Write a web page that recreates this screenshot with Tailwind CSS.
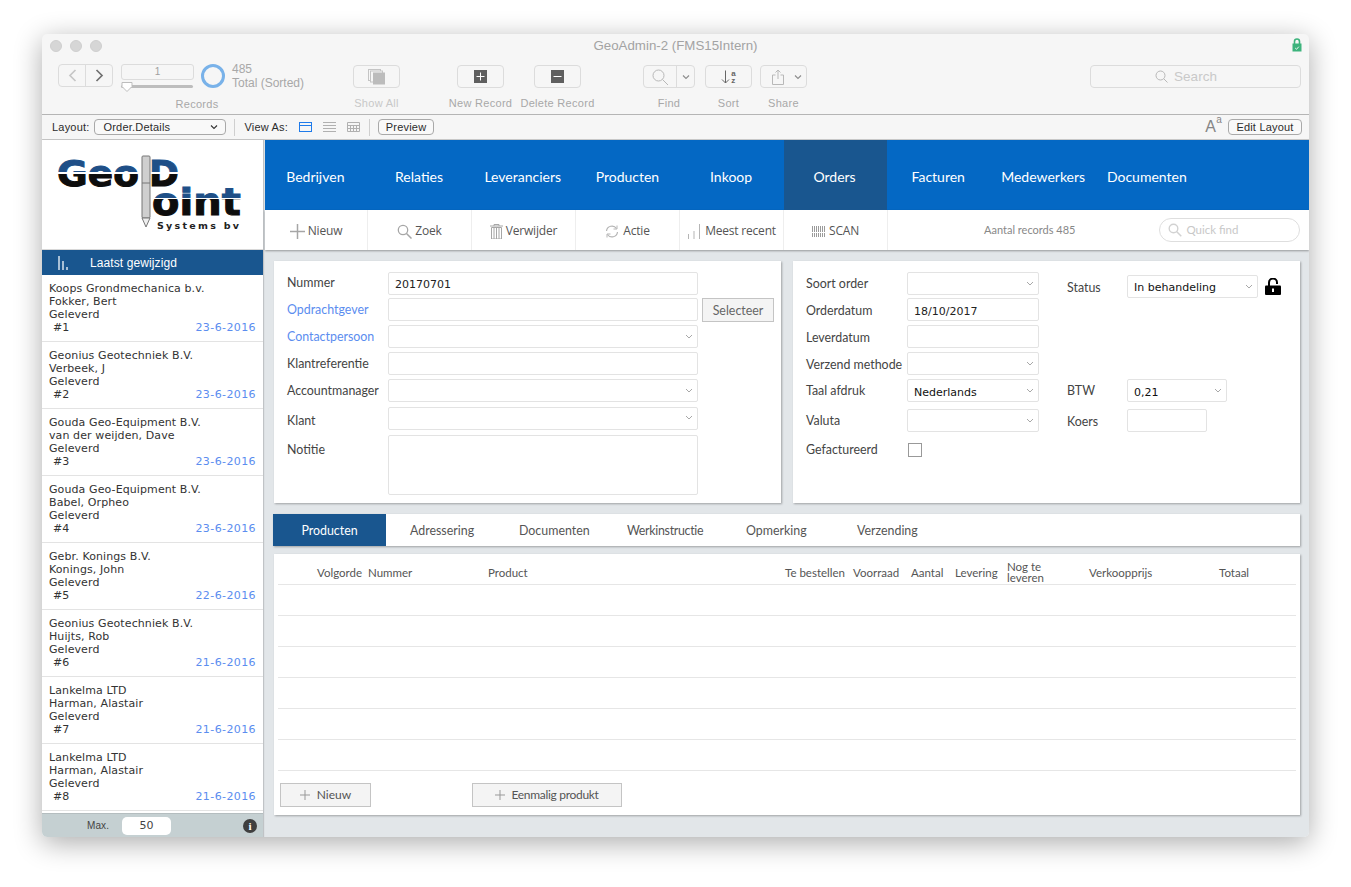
<!DOCTYPE html>
<html lang="en">
<head>
  <meta charset="UTF-8" />
  <title>GeoAdmin-2 (FMS15Intern)</title>
  <script src="https://cdn.jsdelivr.net/npm/@tailwindcss/browser@4"></script>
</head>
<body class="bg-white overflow-hidden">
<div class="w-[1351px] h-[887px] pt-[34px] pl-[42px]">
<!-- window -->
<div class="w-[1267px] h-[803px] rounded-[5px] overflow-hidden bg-[#f6f6f6] shadow-[0_6px_28px_rgba(0,0,0,0.33)] flex flex-col font-['Liberation_Sans',sans-serif]">

  <!-- title + toolbar -->
  <div class="h-[81px] shrink-0 border-b border-[#b5b5b5] relative">
    <div class="absolute left-[8px] top-[6px] flex gap-[8px]">
      <span class="w-[12px] h-[12px] rounded-full bg-[#d6d6d6] border border-[#cfcfcf]"></span>
      <span class="w-[12px] h-[12px] rounded-full bg-[#d6d6d6] border border-[#cfcfcf]"></span>
      <span class="w-[12px] h-[12px] rounded-full bg-[#d6d6d6] border border-[#cfcfcf]"></span>
    </div>
    <div class="text-center text-[13.3px] leading-[24px] text-[#a3a3a3]">GeoAdmin-2 (FMS15Intern)</div>
    <svg class="absolute right-[7px] top-[4px]" width="10" height="14" viewBox="0 0 10 14"><path d="M2.5 6V3.5a2.5 2.5 0 0 1 5 0V6" fill="none" stroke="#3db37c" stroke-width="1.6"/><rect x="0.5" y="5.5" width="9" height="8" fill="#3db37c"/><path d="M3.2 10l1.3 1.3 2.3-2.6" fill="none" stroke="#fff" stroke-width="0.9"/></svg>

    <div class="flex pl-[16px] pt-[6px] text-[11px] text-[#a8a8a8]">
      <!-- records -->
      <div class="w-[278px] flex flex-col items-center">
        <div class="h-[33px] w-full flex">
          <div class="w-[55px] h-[23px] border border-[#dcdcdc] rounded-[4px] flex">
            <span class="w-[27px] border-r border-[#dcdcdc] flex items-center justify-center"><svg width="9" height="13" viewBox="0 0 9 13"><path d="M7.5 1L2 6.5 7.5 12" fill="none" stroke="#c6c6c6" stroke-width="1.7"/></svg></span>
            <span class="flex-1 flex items-center justify-center"><svg width="9" height="13" viewBox="0 0 9 13"><path d="M1.5 1L7 6.5 1.500 12" fill="none" stroke="#707070" stroke-width="1.7"/></svg></span>
          </div>
          <div class="ml-[8px] w-[73px] relative">
            <div class="h-[16px] border border-[#dcdcdc] rounded-[3px] text-center text-[10px] leading-[14px] text-[#a0a0a0]">1</div>
            <div class="mt-[5px] h-[3px] w-[72px] bg-[#bdbdbd] rounded-full"></div>
            <svg class="absolute left-0 top-[17px]" width="12" height="12" viewBox="0 0 12 12"><path d="M1 1.500h10v4L6 10.500 1 5.500z" fill="#fff" stroke="#bdbdbd"/></svg>
          </div>
          <div class="ml-[7px] w-[24px] h-[24px] rounded-full border-[3.5px] border-[#79b2e9]"></div>
          <div class="ml-[7px] -mt-[2px] leading-[14px] text-[#a8a8a8] whitespace-nowrap text-[12px]"><div>485</div><div>Total (Sorted)</div></div>
        </div>
        <div class="mt-[1px] leading-[13px] tracking-[0.3px]">Records</div>
      </div>
      <!-- show all -->
      <div class="ml-[17px] w-[47px] flex flex-col items-center">
        <div class="mt-[1px] h-[23px] w-[47px] border border-[#dcdcdc] rounded-[4px] flex items-center justify-center">
          <svg width="18" height="16" viewBox="0 0 18 16"><rect x="0.500" y="0.500" width="12" height="11" fill="none" stroke="#c4c4c4"/><rect x="2.500" y="2" width="12" height="11" fill="#f6f6f6" stroke="#c4c4c4"/><rect x="5" y="3.500" width="12" height="12" fill="#bcbcbc"/></svg>
        </div>
        <div class="mt-[9px] leading-[13px] whitespace-nowrap tracking-[0.3px] text-[#c8c8c8]">Show All</div>
      </div>
      <!-- new record -->
      <div class="ml-[57px] w-[47px] flex flex-col items-center">
        <div class="mt-[1px] h-[23px] w-[47px] border border-[#dcdcdc] rounded-[4px] flex items-center justify-center">
          <svg width="13" height="13" viewBox="0 0 13 13"><rect width="13" height="13" fill="#5f5f5f"/><path d="M6.500 2.500v8M2.500 6.500h8" stroke="#fff" stroke-width="1"/></svg>
        </div>
        <div class="mt-[9px] leading-[13px] whitespace-nowrap tracking-[0.3px]">New Record</div>
      </div>
      <!-- delete record -->
      <div class="ml-[30px] w-[47px] flex flex-col items-center">
        <div class="mt-[1px] h-[23px] w-[47px] border border-[#dcdcdc] rounded-[4px] flex items-center justify-center">
          <svg width="13" height="13" viewBox="0 0 13 13"><rect width="13" height="13" fill="#5f5f5f"/><path d="M2.500 6.500h8" stroke="#fff" stroke-width="1"/></svg>
        </div>
        <div class="mt-[9px] leading-[13px] whitespace-nowrap tracking-[0.3px]">Delete Record</div>
      </div>
      <!-- find -->
      <div class="ml-[62px] w-[52px] flex flex-col items-center">
        <div class="mt-[1px] h-[23px] w-[52px] border border-[#dcdcdc] rounded-[4px] flex">
          <span class="w-[33px] border-r border-[#dcdcdc] flex items-center justify-center"><svg width="18" height="18" viewBox="0 0 18 18"><circle cx="7.500" cy="7.500" r="5.500" fill="none" stroke="#b8b8b8" stroke-width="1"/><path d="M11.500 11.500l5.500 5.500" stroke="#b8b8b8" stroke-width="1"/></svg></span>
          <span class="flex-1 flex items-center justify-center"><svg width="8" height="6" viewBox="0 0 8 6"><path d="M1 1.500l3 3 3-3" fill="none" stroke="#8c8c8c" stroke-width="1.100"/></svg></span>
        </div>
        <div class="mt-[9px] leading-[13px] tracking-[0.3px]">Find</div>
      </div>
      <!-- sort -->
      <div class="ml-[10px] w-[47px] flex flex-col items-center">
        <div class="mt-[1px] h-[23px] w-[47px] border border-[#dcdcdc] rounded-[4px] flex items-center justify-center gap-[1px]">
          <svg width="9" height="14" viewBox="0 0 9 14"><path d="M4.500 0.500v12.500M1 9.500l3.500 3.500L8 9.500" fill="none" stroke="#666" stroke-width="1"/></svg>
          <span class="flex flex-col text-[8px] leading-[7px] font-bold text-[#666]"><span>a</span><span>z</span></span>
        </div>
        <div class="mt-[9px] leading-[13px] tracking-[0.3px]">Sort</div>
      </div>
      <!-- share -->
      <div class="ml-[8px] w-[47px] flex flex-col items-center">
        <div class="mt-[1px] h-[23px] w-[47px] border border-[#dcdcdc] rounded-[4px] flex items-center pl-[11px] gap-[10px]">
          <svg width="12" height="16" viewBox="0 0 12 16"><path d="M6 10V1M3.500 3.500L6 1l2.500 2.500M3.500 6H.5v9.500h11V6h-3" fill="none" stroke="#b8b8b8" stroke-width="1"/></svg>
          <svg width="8" height="6" viewBox="0 0 8 6"><path d="M1 1.500l3 3 3-3" fill="none" stroke="#8c8c8c" stroke-width="1.100"/></svg>
        </div>
        <div class="mt-[9px] leading-[13px] tracking-[0.3px]">Share</div>
      </div>
      <!-- search -->
      <div class="ml-[283px] mt-[1px] w-[211px] h-[23px] border border-[#dcdcdc] rounded-[4px] flex items-center justify-center gap-[6px] pr-[19px] text-[13.5px] text-[#c9c9c9]">
        <svg width="13" height="13" viewBox="0 0 13 13"><circle cx="5.500" cy="5.500" r="4.500" fill="none" stroke="#b8b8b8" stroke-width="1"/><path d="M8.800 8.800l3.700 3.700" stroke="#b8b8b8" stroke-width="1"/></svg>
        <span class="pt-[2px]">Search</span>
      </div>
    </div>
  </div>

  <!-- layout bar -->
  <div class="h-[25px] shrink-0 flex items-center pl-[10px] pr-[7px] text-[11px] tracking-[0.2px] text-[#2c2c2c] border-b border-[#c8c8c8]">
    <span>Layout:</span>
    <div class="ml-[5px] w-[132px] h-[16px] border border-[#a9a9a9] rounded-[4px] bg-[#f9f9f9] flex items-center justify-between pl-[8px] pr-[7px]">
      <span>Order.Details</span>
      <svg width="8" height="6" viewBox="0 0 8 6"><path d="M1 1.500l3 3 3-3" fill="none" stroke="#333" stroke-width="1.100"/></svg>
    </div>
    <span class="ml-[8px] w-px h-[17px] bg-[#cfcfcf]"></span>
    <span class="ml-[9px]">View As:</span>
    <svg class="ml-[11px]" width="13" height="10" viewBox="0 0 13 10"><rect x="0.500" y="0.500" width="12" height="9" fill="none" stroke="#1f7bea"/><path d="M0.500 3.500h12" stroke="#1f7bea"/></svg>
    <svg class="ml-[11px]" width="13" height="10" viewBox="0 0 13 10"><path d="M0 .5h13M0 3.500h13M0 6.500h13M0 9.500h13" stroke="#b0b0b0"/></svg>
    <svg class="ml-[11px]" width="13" height="10" viewBox="0 0 13 10"><path d="M.5 .5h12v9H.5zM0 3.500h13M0 6.500h13M3.500 3v7M6.500 3v7M9.500 3v7" fill="none" stroke="#b0b0b0"/></svg>
    <span class="ml-[9px] w-px h-[17px] bg-[#cfcfcf]"></span>
    <div class="ml-[8px] w-[56px] h-[16px] border border-[#a9a9a9] rounded-[4px] bg-[#f9f9f9] text-center leading-[14px]">Preview</div>
    <span class="ml-auto text-[16px] leading-none text-[#858585]">A<sup class="text-[10px] align-[4px] leading-none">a</sup></span>
    <div class="ml-[6px] w-[74px] h-[16px] border border-[#a9a9a9] rounded-[4px] bg-[#f9f9f9] text-center leading-[14px]">Edit Layout</div>
  </div>

  <!-- content -->
  <div class="flex-1 flex min-h-0 bg-[#e2e6e9]">

    <!-- left column -->
    <div class="w-[221px] shrink-0 flex flex-col bg-white shadow-[1px_0_1px_rgba(0,0,0,0.15)] font-['DejaVu_Sans',sans-serif] text-[11px] tracking-[0.1px] leading-[13px] text-[#333]">
      <div class="h-[110px] shrink-0 border-b border-[#d8d8d8] pt-[15px] pl-[15px]">
        <svg width="186" height="82" viewBox="0 0 186 82">
          <defs>
            <linearGradient id="logoTop" gradientUnits="userSpaceOnUse" x1="0" y1="0" x2="0" y2="36">
              <stop offset="0.47" stop-color="#1f4f87"/>
              <stop offset="0.47" stop-color="#ffffff"/>
              <stop offset="0.52" stop-color="#ffffff"/>
              <stop offset="0.52" stop-color="#0d0d0d"/>
            </linearGradient>
            <linearGradient id="logoBottom" gradientUnits="userSpaceOnUse" x1="0" y1="30" x2="0" y2="62">
              <stop offset="0.4" stop-color="#1f4f87"/>
              <stop offset="0.4" stop-color="#ffffff"/>
              <stop offset="0.45" stop-color="#ffffff"/>
              <stop offset="0.45" stop-color="#0d0d0d"/>
            </linearGradient>
          </defs>
          <text x="0" y="31" font-family="DejaVu Sans" font-weight="700" font-size="36" textLength="82" lengthAdjust="spacingAndGlyphs" fill="url(#logoTop)" stroke="url(#logoTop)" stroke-width="1">Geo</text>
          <text x="92" y="31" font-family="DejaVu Sans" font-weight="700" font-size="36" textLength="30" lengthAdjust="spacingAndGlyphs" fill="url(#logoTop)" stroke="url(#logoTop)" stroke-width="1">D</text>
          <text x="95" y="60" font-family="DejaVu Sans" font-weight="700" font-size="38" textLength="89" lengthAdjust="spacingAndGlyphs" fill="url(#logoBottom)" stroke="url(#logoBottom)" stroke-width="1">oint</text>
          <rect x="85" y="1" width="8" height="62" rx="1" fill="#cfcfcf" stroke="#777"/>
          <path d="M85 63l4 9 4-9z" fill="#eee" stroke="#777"/>
          <path d="M85 28h8" stroke="#777"/>
          <text x="100" y="74" font-family="DejaVu Sans" font-weight="700" font-size="9.500" textLength="82" fill="#222">Systems bv</text>
        </svg>
      </div>
      <div class="h-[25px] shrink-0 bg-[#19568f] flex items-center text-white font-['Liberation_Sans',sans-serif] text-[12px]">
        <svg class="ml-[16px]" width="12" height="14" viewBox="0 0 12 14"><path d="M1 0v14M5 5v9M9 11v3" stroke="#d7e3ee" stroke-width="1.500"/></svg>
        <span class="ml-[20px] pt-[1px]">Laatst gewijzigd</span>
      </div>

      <div class="flex-1 min-h-0 overflow-hidden">
        <div class="h-[67px] pt-[7px] pl-[7px] pr-[7px] border-b border-[#e3e3e3]">
          <div>Koops Grondmechanica b.v.</div><div>Fokker, Bert</div><div>Geleverd</div>
          <div class="flex justify-between pl-[4px]"><span>#1</span><span class="text-[#5b8def] tracking-[0.4px]">23-6-2016</span></div>
        </div>
        <div class="h-[67px] pt-[7px] pl-[7px] pr-[7px] border-b border-[#e3e3e3]">
          <div>Geonius Geotechniek B.V.</div><div>Verbeek, J</div><div>Geleverd</div>
          <div class="flex justify-between pl-[4px]"><span>#2</span><span class="text-[#5b8def] tracking-[0.4px]">23-6-2016</span></div>
        </div>
        <div class="h-[67px] pt-[7px] pl-[7px] pr-[7px] border-b border-[#e3e3e3]">
          <div>Gouda Geo-Equipment B.V.</div><div>van der weijden, Dave</div><div>Geleverd</div>
          <div class="flex justify-between pl-[4px]"><span>#3</span><span class="text-[#5b8def] tracking-[0.4px]">23-6-2016</span></div>
        </div>
        <div class="h-[67px] pt-[7px] pl-[7px] pr-[7px] border-b border-[#e3e3e3]">
          <div>Gouda Geo-Equipment B.V.</div><div>Babel, Orpheo</div><div>Geleverd</div>
          <div class="flex justify-between pl-[4px]"><span>#4</span><span class="text-[#5b8def] tracking-[0.4px]">23-6-2016</span></div>
        </div>
        <div class="h-[67px] pt-[7px] pl-[7px] pr-[7px] border-b border-[#e3e3e3]">
          <div>Gebr. Konings B.V.</div><div>Konings, John</div><div>Geleverd</div>
          <div class="flex justify-between pl-[4px]"><span>#5</span><span class="text-[#5b8def] tracking-[0.4px]">22-6-2016</span></div>
        </div>
        <div class="h-[67px] pt-[7px] pl-[7px] pr-[7px] border-b border-[#e3e3e3]">
          <div>Geonius Geotechniek B.V.</div><div>Huijts, Rob</div><div>Geleverd</div>
          <div class="flex justify-between pl-[4px]"><span>#6</span><span class="text-[#5b8def] tracking-[0.4px]">21-6-2016</span></div>
        </div>
        <div class="h-[67px] pt-[7px] pl-[7px] pr-[7px] border-b border-[#e3e3e3]">
          <div>Lankelma LTD</div><div>Harman, Alastair</div><div>Geleverd</div>
          <div class="flex justify-between pl-[4px]"><span>#7</span><span class="text-[#5b8def] tracking-[0.4px]">21-6-2016</span></div>
        </div>
        <div class="h-[67px] pt-[7px] pl-[7px] pr-[7px] border-b border-[#e3e3e3]">
          <div>Lankelma LTD</div><div>Harman, Alastair</div><div>Geleverd</div>
          <div class="flex justify-between pl-[4px]"><span>#8</span><span class="text-[#5b8def] tracking-[0.4px]">21-6-2016</span></div>
        </div>
      </div>

      <div class="h-[24px] shrink-0 bg-[#c5d0d2] border-t border-[#b4bdbf] flex items-center">
        <span class="ml-[45px] text-[10px] font-['Liberation_Sans',sans-serif] text-[#444]">Max.</span>
        <span class="ml-[13px] w-[49px] h-[18px] rounded-[5px] bg-white text-center leading-[18px] text-[#444]">50</span>
        <span class="ml-auto mr-[6px] w-[14px] h-[14px] rounded-full bg-[#3f3f3f] text-white text-center text-[11px] leading-[14px] font-bold font-['Liberation_Serif',serif]">i</span>
      </div>
    </div>

    <!-- right column -->
    <div class="w-[1044px] ml-[2px] font-['Lato',sans-serif] text-[12.4px] text-[#444]">

      <!-- main nav -->
      <div class="h-[70px] bg-[#0468c4] flex pl-[0.5px] text-white text-[14px] leading-[74px] text-center">
        <div class="w-[103.700px] pr-[4px]">Bedrijven</div>
        <div class="w-[103.700px] pr-[4px]">Relaties</div>
        <div class="w-[103.700px] pr-[4px]">Leveranciers</div>
        <div class="w-[103.700px] pr-[2px]">Producten</div>
        <div class="w-[103.700px] pr-[2px]">Inkoop</div>
        <div class="w-[103.200px] pr-[2px] bg-[#19568f]">Orders</div>
        <div class="w-[104.200px] pr-[2px]">Facturen</div>
        <div class="w-[103.700px]">Medewerkers</div>
        <div class="w-[103.700px]">Documenten</div>
      </div>

      <!-- action bar -->
      <div class="h-[40px] bg-white shadow-[0_1px_2px_rgba(0,0,0,0.35)] flex items-center font-['Open_Sans',sans-serif] text-[12px] text-[#555] tracking-[-0.2px]">
        <div class="w-[103px] h-full pt-[2px] border-r border-[#eeeeee] flex items-center justify-center gap-[3px]"><svg width="15" height="15" viewBox="0 0 15 15"><path d="M7.500 0v15M0 7.500h15" stroke="#a6a6a6" stroke-width="1.500"/></svg><span>Nieuw</span></div>
        <div class="w-[104px] h-full pt-[2px] border-r border-[#eeeeee] flex items-center justify-center gap-[3px]"><svg width="15" height="15" viewBox="0 0 15 15"><circle cx="6" cy="6" r="4.700" fill="none" stroke="#a6a6a6" stroke-width="1.300"/><path d="M9.500 9.500l5 5" stroke="#a6a6a6" stroke-width="1.500"/></svg><span>Zoek</span></div>
        <div class="w-[104px] h-full pt-[2px] border-r border-[#eeeeee] flex items-center justify-center gap-[3px]"><svg width="13" height="15" viewBox="0 0 13 15"><path d="M0 2h13M4 2V.5h5V2" fill="none" stroke="#a6a6a6"/><path d="M1.500 3.500h10V15h-10zM4 4v11M6.500 4v11M9 4v11" fill="none" stroke="#a6a6a6"/></svg><span>Verwijder</span></div>
        <div class="w-[104px] h-full pt-[2px] border-r border-[#eeeeee] flex items-center justify-center gap-[4px]"><svg width="14" height="13" viewBox="0 0 14 13"><path d="M1.500 6a5.500 5.500 0 0 1 10-2.500M12.500 7a5.500 5.500 0 0 1-10 2.500" fill="none" stroke="#b5b5b5" stroke-width="1.200"/><path d="M12 0.500v3.500H8.500M2 12.500V9h3.500" fill="none" stroke="#b5b5b5" stroke-width="1"/></svg><span>Actie</span></div>
        <div class="w-[104px] h-full pt-[2px] border-r border-[#eeeeee] flex items-center justify-center gap-[4px]"><svg width="14" height="15" viewBox="0 0 14 15"><path d="M1.500 10v5M7 7v8M12.500 0v15" stroke="#b5b5b5" stroke-width="1"/></svg><span>Meest recent</span></div>
        <div class="w-[104px] h-full pt-[2px] border-r border-[#eeeeee] flex items-center justify-center gap-[4px]"><svg width="13" height="11" viewBox="0 0 13 11"><path d="M.5 0v11M2.500 0v11M4.500 0v11M6.500 0v11M8.500 0v11M10.500 0v11M12.500 0v11" stroke="#9a9a9a"/><path d="M0 6.500h13" stroke="#fff"/></svg><span>SCAN</span></div>
        <div class="ml-[96px] text-[11px] font-['Lato',sans-serif] text-[#888] tracking-normal">Aantal records 485</div>
        <div class="ml-[84px] w-[141px] h-[24px] border border-[#dedede] rounded-full flex items-center pl-[8px] gap-[4px] text-[11.500px] font-['Lato',sans-serif] text-[#c8c8c8] tracking-normal">
          <svg width="14" height="14" viewBox="0 0 14 14"><circle cx="5.500" cy="5.500" r="4.300" fill="none" stroke="#d2d2d2" stroke-width="1.400"/><path d="M8.800 8.800l4.500 4.500" stroke="#d2d2d2" stroke-width="1.500"/></svg>
          <span>Quick find</span>
        </div>
      </div>

      <!-- form panels -->
      <div class="flex gap-[12px] mt-[11px] ml-[9px]">
        <div class="w-[507px] h-[242px] bg-white shadow-[1px_1px_2px_rgba(0,0,0,0.3)] pt-[11px] pl-[13px]">
          <div class="flex h-[23px] items-center"><span class="w-[101px]">Nummer</span><div class="w-[310px] h-[23px] border border-[#e3e3e3] rounded-[2px] pl-[6px] leading-[23px] font-['DejaVu_Sans',sans-serif] text-[11px] text-[#222]">20170701</div></div>
          <div class="flex h-[23px] items-center mt-[3px]"><span class="w-[101px] pt-[2px] text-[#5b8def]">Opdrachtgever</span><div class="w-[310px] h-[23px] border border-[#e3e3e3] rounded-[2px]"></div><div class="ml-[4px] w-[72px] h-[24px] bg-[#f4f4f4] border border-[#c4c4c4] text-center leading-[23px] text-[#666]">Selecteer</div></div>
          <div class="flex h-[23px] items-center mt-[4px]"><span class="w-[101px] pt-[2px] text-[#5b8def]">Contactpersoon</span><div class="w-[310px] h-[23px] border border-[#e3e3e3] rounded-[2px] flex items-center justify-end pr-[4px]"><svg width="8" height="5" viewBox="0 0 8 5"><path d="M1 1l3 3 3-3" fill="none" stroke="#a8a8a8"/></svg></div></div>
          <div class="flex h-[23px] items-center mt-[4px]"><span class="w-[101px] pt-[2px]">Klantreferentie</span><div class="w-[310px] h-[23px] border border-[#e3e3e3] rounded-[2px]"></div></div>
          <div class="flex h-[23px] items-center mt-[4px]"><span class="w-[101px] pt-[2px]">Accountmanager</span><div class="w-[310px] h-[23px] border border-[#e3e3e3] rounded-[2px] flex items-center justify-end pr-[4px]"><svg width="8" height="5" viewBox="0 0 8 5"><path d="M1 1l3 3 3-3" fill="none" stroke="#a8a8a8"/></svg></div></div>
          <div class="flex h-[23px] items-center mt-[5px]"><span class="w-[101px] pt-[6px]">Klant</span><div class="w-[310px] h-[23px] border border-[#e3e3e3] rounded-[2px] flex items-center justify-end pr-[4px] pb-[3px]"><svg width="8" height="5" viewBox="0 0 8 5"><path d="M1 1l3 3 3-3" fill="none" stroke="#a8a8a8"/></svg></div></div>
          <div class="flex mt-[5px]"><span class="w-[101px] pt-[6px]">Notitie</span><div class="w-[310px] h-[60px] border border-[#e3e3e3] rounded-[2px]"></div></div>
        </div>

        <div class="w-[507px] h-[242px] bg-white shadow-[1px_1px_2px_rgba(0,0,0,0.3)] pt-[11px] pl-[13px] flex">
          <div class="w-[261px]">
            <div class="flex h-[23px] items-center"><span class="w-[101px] pt-[1px]">Soort order</span><div class="w-[132px] h-[23px] border border-[#e3e3e3] rounded-[2px] flex items-center justify-end pr-[4px]"><svg width="8" height="5" viewBox="0 0 8 5"><path d="M1 1l3 3 3-3" fill="none" stroke="#a8a8a8"/></svg></div></div>
            <div class="flex h-[23px] items-center mt-[3px]"><span class="w-[101px] pt-[3px]">Orderdatum</span><div class="w-[132px] h-[23px] border border-[#e3e3e3] rounded-[2px] pl-[6px] leading-[25px] font-['DejaVu_Sans',sans-serif] text-[11px] text-[#222]">18/10/2017</div></div>
            <div class="flex h-[23px] items-center mt-[4px]"><span class="w-[101px] pt-[3px]">Leverdatum</span><div class="w-[132px] h-[23px] border border-[#e3e3e3] rounded-[2px]"></div></div>
            <div class="flex h-[23px] items-center mt-[4px]"><span class="w-[101px] pt-[3px]">Verzend methode</span><div class="w-[132px] h-[23px] border border-[#e3e3e3] rounded-[2px] flex items-center justify-end pr-[4px]"><svg width="8" height="5" viewBox="0 0 8 5"><path d="M1 1l3 3 3-3" fill="none" stroke="#a8a8a8"/></svg></div></div>
            <div class="flex h-[23px] items-center mt-[4px]"><span class="w-[101px] pt-[2px]">Taal afdruk</span><div class="w-[132px] h-[23px] border border-[#e3e3e3] rounded-[2px] flex items-center justify-between pl-[6px] pr-[4px] font-['DejaVu_Sans',sans-serif] text-[11px] text-[#111]"><span class="pt-[5px]">Nederlands</span><svg width="8" height="5" viewBox="0 0 8 5"><path d="M1 1l3 3 3-3" fill="none" stroke="#a8a8a8"/></svg></div></div>
            <div class="flex h-[23px] items-center mt-[7px]"><span class="w-[101px] pt-[1px]">Valuta</span><div class="w-[132px] h-[23px] border border-[#e3e3e3] rounded-[2px] flex items-center justify-end pr-[4px]"><svg width="8" height="5" viewBox="0 0 8 5"><path d="M1 1l3 3 3-3" fill="none" stroke="#a8a8a8"/></svg></div></div>
            <div class="flex h-[14px] items-center mt-[11px]"><span class="w-[101px]">Gefactureerd</span><div class="ml-[1px] w-[14px] h-[14px] border border-[#999]"></div></div>
          </div>
          <div class="w-[220px]">
            <div class="flex h-[23px] items-center mt-[3px]"><span class="w-[60px] pt-[3px]">Status</span><div class="w-[131px] h-[23px] border border-[#e3e3e3] rounded-[2px] flex items-center justify-between pl-[6px] pr-[4px] font-['DejaVu_Sans',sans-serif] text-[11px] text-[#111]"><span class="pt-[4px]">In behandeling</span><svg width="8" height="5" viewBox="0 0 8 5"><path d="M1 1l3 3 3-3" fill="none" stroke="#a8a8a8"/></svg></div><svg class="ml-[7px]" width="16" height="17" viewBox="0 0 16 17"><path d="M4 8V4.500a4 4 0 0 1 8 0V6" fill="none" stroke="#000" stroke-width="2"/><rect x="0" y="7.500" width="16" height="9.500" rx="1" fill="#000"/><rect x="7" y="10.500" width="2" height="3.500" fill="#fff"/></svg></div>
            <div class="flex h-[23px] items-center mt-[81px]"><span class="w-[60px] pt-[2px]">BTW</span><div class="w-[100px] h-[23px] border border-[#e3e3e3] rounded-[2px] flex items-center justify-between pl-[6px] pr-[4px] font-['DejaVu_Sans',sans-serif] text-[11px] text-[#111]"><span class="pt-[5px]">0,21</span><svg width="8" height="5" viewBox="0 0 8 5"><path d="M1 1l3 3 3-3" fill="none" stroke="#a8a8a8"/></svg></div></div>
            <div class="flex h-[23px] items-center mt-[7px]"><span class="w-[60px] pt-[4px]">Koers</span><div class="w-[80px] h-[23px] border border-[#e3e3e3] rounded-[2px]"></div></div>
          </div>
        </div>
      </div>

      <!-- tabs -->
      <div class="mt-[11px] ml-[8px] w-[1027px] h-[32px] bg-white shadow-[1px_1px_2px_rgba(0,0,0,0.3)] flex leading-[33px] text-[#555] whitespace-nowrap">
        <div class="w-[113px] bg-[#19568f] text-white text-center">Producten</div>
        <div class="ml-[24px] w-[109px]">Adressering</div>
        <div class="w-[108px]">Documenten</div>
        <div class="w-[119px] tracking-[-0.3px]">Werkinstructie</div>
        <div class="w-[111px]">Opmerking</div>
        <div>Verzending</div>
      </div>

      <!-- products table -->
      <div class="mt-[8px] ml-[9px] w-[1026px] h-[261px] bg-white shadow-[1px_1px_2px_rgba(0,0,0,0.3)] pl-[4px] pr-[4px] pt-[3px] text-[11.5px] text-[#555]">
        <div class="grid grid-cols-[39px_51px_120px_297px_68px_58px_44px_52px_82px_130px_1fr] items-center h-[28px] pt-[4px] leading-[11px] border-b border-[#e6e6e6] whitespace-nowrap">
          <span></span><span>Volgorde</span><span>Nummer</span><span>Product</span><span>Te bestellen</span><span>Voorraad</span><span>Aantal</span><span>Levering</span><span class="-mt-[2px]">Nog te<br />leveren</span><span>Verkoopprijs</span><span>Totaal</span>
        </div>
        <div class="h-[31px] border-b border-[#e6e6e6]"></div>
        <div class="h-[31px] border-b border-[#e6e6e6]"></div>
        <div class="h-[31px] border-b border-[#e6e6e6]"></div>
        <div class="h-[31px] border-b border-[#e6e6e6]"></div>
        <div class="h-[31px] border-b border-[#e6e6e6]"></div>
        <div class="h-[31px] border-b border-[#e6e6e6]"></div>
        <div class="flex mt-[12px] ml-[2px] text-[12px] text-[#555]">
          <div class="w-[91px] h-[24px] bg-[#f4f4f4] border border-[#c4c4c4] flex items-center justify-center gap-[7px]"><svg width="10" height="10" viewBox="0 0 10 10"><path d="M5 0v10M0 5h10" stroke="#999"/></svg><span>Nieuw</span></div>
          <div class="ml-[101px] w-[150px] h-[24px] bg-[#f4f4f4] border border-[#c4c4c4] flex items-center justify-center gap-[6px]"><svg width="10" height="10" viewBox="0 0 10 10"><path d="M5 0v10M0 5h10" stroke="#999"/></svg><span class="tracking-[-0.3px]">Eenmalig produkt</span></div>
        </div>
      </div>
    </div>
  </div>
</div>
</div>
</body>
</html>
